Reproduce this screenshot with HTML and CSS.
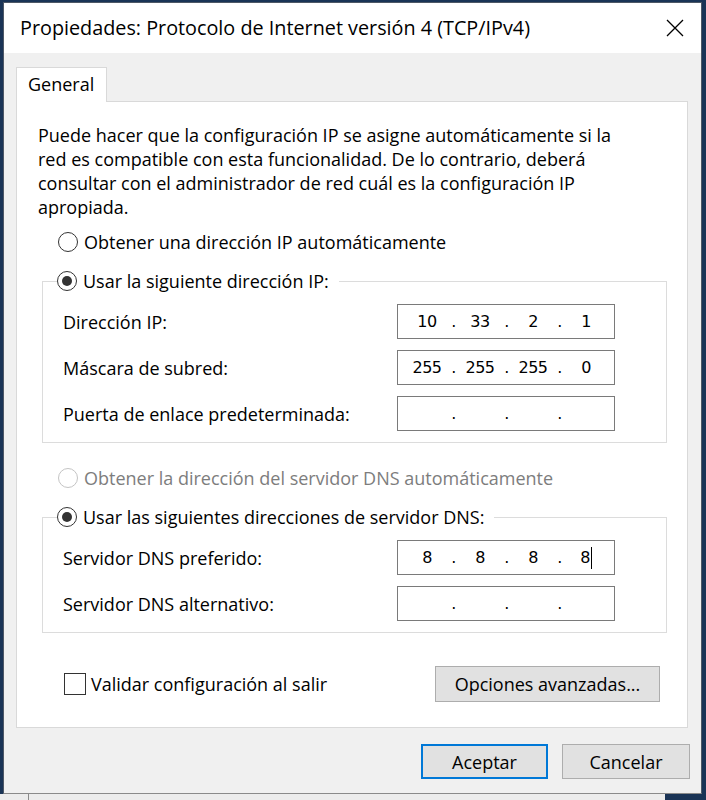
FILE: index.html
```html
<!DOCTYPE html>
<html lang="es">
<head>
<meta charset="utf-8">
<title>Propiedades: Protocolo de Internet versión 4 (TCP/IPv4)</title>
<link rel="stylesheet" href="styles.css">
</head>
<body>
<div class="screen">
  <div class="window">
    <div class="titlebar">
      <span class="title">Propiedades: Protocolo de Internet versión 4 (TCP/IPv4)</span>
      <button class="close" aria-label="Cerrar">
        <svg width="18" height="18" viewBox="0 0 18 18"><path d="M1 1 L17 17 M17 1 L1 17" stroke="#000" stroke-width="1.3" fill="none"/></svg>
      </button>
    </div>
    <div class="client">
      <div class="tabs"><div class="tab">General</div></div>
      <div class="panel">
        <p class="desc">Puede hacer que la configuración IP se asigne automáticamente si la<br>red es compatible con esta funcionalidad. De lo contrario, deberá<br>consultar con el administrador de red cuál es la configuración IP<br>apropiada.</p>
        <div class="option first"><span class="radio"></span><span>Obtener una dirección IP automáticamente</span></div>
        <fieldset class="group">
          <legend class="option legend"><span class="radio checked"></span><span>Usar la siguiente dirección IP:</span></legend>
          <div class="rows">
            <div class="field"><span>Dirección IP:</span>
              <div class="ipbox"><span>10</span><span>.</span><span>33</span><span>.</span><span>2</span><span>.</span><span>1</span></div>
            </div>
            <div class="field"><span>Máscara de subred:</span>
              <div class="ipbox"><span>255</span><span>.</span><span>255</span><span>.</span><span>255</span><span>.</span><span>0</span></div>
            </div>
            <div class="field"><span>Puerta de enlace predeterminada:</span>
              <div class="ipbox"><span></span><span>.</span><span></span><span>.</span><span></span><span>.</span><span></span></div>
            </div>
          </div>
        </fieldset>
        <div class="option disabled"><span class="radio"></span><span>Obtener la dirección del servidor DNS automáticamente</span></div>
        <fieldset class="group">
          <legend class="option legend"><span class="radio checked"></span><span>Usar las siguientes direcciones de servidor DNS:</span></legend>
          <div class="rows">
            <div class="field"><span>Servidor DNS preferido:</span>
              <div class="ipbox"><span>8</span><span>.</span><span>8</span><span>.</span><span>8</span><span>.</span><span class="editing">8<i class="caret"></i></span></div>
            </div>
            <div class="field"><span>Servidor DNS alternativo:</span>
              <div class="ipbox"><span></span><span>.</span><span></span><span>.</span><span></span><span>.</span><span></span></div>
            </div>
          </div>
        </fieldset>
        <div class="footer-row">
          <div class="check"><span class="box"></span><span>Validar configuración al salir</span></div>
          <button class="btn adv">Opciones avanzadas...</button>
        </div>
      </div>
      <div class="actions">
        <button class="btn ok">Aceptar</button>
        <button class="btn cancel">Cancelar</button>
      </div>
    </div>
  </div>
  <div class="behind"></div>
</div>
</body>
</html>
```
FILE: styles.css
```css
html, body {
  margin: 0;
  padding: 0;
}
body {
  width: 706px;
  height: 800px;
  overflow: hidden;
  background: #1a3456;
  font-family: "Open Sans", "Noto Sans", sans-serif;
  font-size: 18px;
  color: #000;
}
.screen {
  display: flex;
  flex-direction: column;
  padding-top: 2px;
}
.window {
  margin-left: 3px;
  width: 699px;
  height: 792px;
  box-sizing: border-box;
  border: 1px solid #4e5866;
  border-bottom-color: #8a8a8a;
  background: #f0f0f0;
  display: flex;
  flex-direction: column;
}
.titlebar {
  height: 50px;
  flex: none;
  background: #fff;
  display: flex;
  align-items: center;
  padding-left: 16px;
}
.title {
  white-space: nowrap;
  font-size: 19.8px;
  margin-top: -2px;
}
.close {
  margin-left: auto;
  width: 52px;
  height: 50px;
  border: 0;
  padding: 0;
  background: transparent;
  display: flex;
  align-items: center;
  justify-content: center;
}
.client {
  flex: 1;
  padding: 14px 11px 0 12px;
}
.tabs {
  display: flex;
}
.tab {
  width: 91px;
  height: 35px;
  box-sizing: border-box;
  border: 1px solid #d9d9d9;
  border-bottom: 0;
  background: #fff;
  position: relative;
  z-index: 1;
  padding-left: 11px;
  line-height: 33px;
}
.panel {
  margin-top: -1px;
  margin-right: 2px;
  height: 627px;
  box-sizing: border-box;
  border: 1px solid #d9d9d9;
  background: #fff;
  padding: 21px 20px 0 21px;
  display: flex;
  flex-direction: column;
}
.desc {
  margin: 0;
  line-height: 24px;
  white-space: nowrap;
}
.option {
  display: flex;
  align-items: center;
  gap: 6px;
  height: 24px;
  white-space: nowrap;
}
.option.first {
  margin: 11px 0 0 20px;
}
.option.disabled {
  margin: 23px 0 0 20px;
  color: #7d7d7d;
}
.radio {
  width: 20px;
  height: 20px;
  box-sizing: border-box;
  border: 1px solid #333;
  border-radius: 50%;
  background: #fff;
  display: grid;
  place-items: center;
  flex: none;
}
.radio.checked::after {
  content: "";
  width: 10px;
  height: 10px;
  border-radius: 50%;
  background: #333;
}
.disabled .radio {
  border-color: #c4c4c4;
}
.group {
  margin: 15px 0 0 4px;
  padding: 0;
  border: 1px solid #dcdcdc;
  min-inline-size: auto;
}
.legend {
  margin-left: 14px;
  padding: 0 10px 0 0;
  background: #fff;
}
.rows {
  display: flex;
  flex-direction: column;
  gap: 11px;
  padding: 11px 51px 11px 20px;
}
.field {
  display: flex;
  align-items: center;
  justify-content: space-between;
  height: 35px;
  white-space: nowrap;
}
.ipbox {
  width: 218px;
  height: 35px;
  box-sizing: border-box;
  border: 1px solid #7a7a7a;
  display: grid;
  grid-template-columns: 40px 13px 40px 13px 40px 13px 40px;
  align-items: center;
  padding-left: 9px;
  font-family: "DejaVu Sans", Verdana, sans-serif;
  font-size: 16px;
  letter-spacing: -0.5px;
}
.ipbox span {
  text-align: center;
}
.editing {
  display: flex;
  align-items: center;
  justify-content: center;
}
.caret {
  display: inline-block;
  width: 1px;
  height: 22px;
  background: #000;
  margin-left: 1px;
}
.footer-row {
  display: flex;
  align-items: center;
  justify-content: space-between;
  margin-top: 33px;
  padding: 0 7px 0 26px;
}
.check {
  display: flex;
  align-items: center;
  gap: 5px;
  white-space: nowrap;
}
.box {
  width: 22px;
  height: 22px;
  box-sizing: border-box;
  border: 1px solid #333;
  background: #fff;
}
.btn {
  font: inherit;
  color: #000;
  background: #e1e1e1;
  border: 1px solid #adadad;
  padding: 0;
  box-sizing: border-box;
}
.adv {
  width: 225px;
  height: 36px;
}
.actions {
  display: flex;
  justify-content: flex-end;
  gap: 14px;
  margin-top: 16px;
}
.actions .btn {
  height: 35px;
}
.ok {
  width: 127px;
  border: 2px solid #0078d7;
}
.cancel {
  width: 128px;
}
.behind {
  width: 665px;
  height: 6px;
  background: linear-gradient(to right, #ececec 28px, #8a8a8a 28px 29px, #ececec 29px);
}
```
